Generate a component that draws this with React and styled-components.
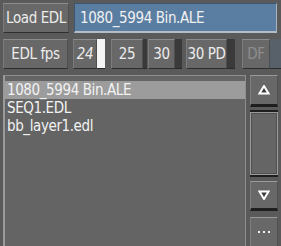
import React from "react";
import styled, { createGlobalStyle } from "styled-components";

const Global = createGlobalStyle`
  html, body { margin: 0; padding: 0; background: #5a5a5a; }
  body {
    font-family: "DejaVu Sans Condensed", "DejaVu Sans", sans-serif;
    font-stretch: condensed;
  }
`;

const Panel = styled.div`
  width: 281px;
  height: 246px;
  box-sizing: border-box;
  padding: 3px 0 0 3px;
  background: #5a5a5a;
  display: flex;
  flex-direction: column;
  gap: 6px;
  overflow: hidden;
  color: #ececec;
  font-size: 15px;
  letter-spacing: -0.4px;
`;

const Row = styled.div`
  display: flex;
  align-items: stretch;
  height: 30px;
`;

const Button = styled.div`
  box-sizing: border-box;
  width: ${(p) => p.$w}px;
  margin-right: ${(p) => p.$mr || 0}px;
  display: flex;
  align-items: center;
  justify-content: center;
  background: #686868;
  border-top: 1px solid #8c8c8c;
  border-left: 1px solid #7c7c7c;
  border-right: 1px solid #4e4e4e;
  border-bottom: 1px solid #2e2e2e;
  color: ${(p) => (p.$disabled ? "#8e8e8e" : "#ececec")};
  white-space: nowrap;
  padding-bottom: 1px;
`;

const Field = styled.div`
  box-sizing: border-box;
  flex: 1;
  margin-right: 4px;
  background: #5a7ea2;
  border-top: 1px solid #3c5570;
  border-left: 1px solid #3c5570;
  border-right: 1px solid #a9b4bf;
  border-bottom: 2px solid #b4bcc4;
  display: flex;
  align-items: center;
  padding-left: 5px;
  color: #f0f0f0;
`;

const Toggle = styled.div`
  display: flex;
  margin-right: ${(p) => p.$mr || 0}px;
`;

const Indicator = styled.div`
  box-sizing: border-box;
  width: ${(p) => p.$w}px;
  background: ${(p) => (p.$on ? "#f4f4f4" : p.$off ? "#58606a" : "#3a3a3a")};
  border-bottom: 1px solid #2a2a2a;
`;

const Body = styled.div`
  display: flex;
  flex: 1;
  gap: 4px;
  min-height: 0;
`;

const List = styled.div`
  box-sizing: border-box;
  width: 243px;
  height: 173px;
  background: #646464;
  border: 1px solid #8e8e8e;
  border-left: 2px solid #9a9a9a;
  padding-top: 5px;
  display: flex;
  flex-direction: column;
`;

const Item = styled.div`
  height: 18px;
  line-height: 18px;
  padding-left: 2px;
  background: ${(p) => (p.$sel ? "#9c9c9c" : "transparent")};
  color: #f2f2f2;
  white-space: nowrap;
`;

const Scroll = styled.div`
  width: 28px;
  display: flex;
  flex-direction: column;
`;

const ScrollBtn = styled.div`
  box-sizing: border-box;
  height: ${(p) => p.$h}px;
  margin-top: ${(p) => p.$mt || 0}px;
  flex-shrink: 0;
  background: #686868;
  border-top: 1px solid #9a9a9a;
  border-left: 1px solid #7e7e7e;
  border-right: 1px solid #505050;
  border-bottom: 3px solid #1e1e1e;
  display: flex;
  align-items: center;
  justify-content: center;
`;

const Track = styled.div`
  box-sizing: border-box;
  height: 67px;
  margin-top: 3px;
  flex-shrink: 0;
  background: #646464;
  border-top: 2px solid #1e1e1e;
  border-bottom: 2px solid #1e1e1e;
  display: flex;
`;

const TrackInner = styled.div`
  flex: 1;
  border: 1px solid #9a9a9a;
  box-shadow: inset 1px 1px 0 #505050, inset -1px -1px 0 #505050;
  background: #656565;
`;

const Dots = styled.div`
  display: flex;
  gap: 3px;
  margin-bottom: 4px;
`;

const Dot = styled.span`
  width: 2px;
  height: 2px;
  background: #f0f0f0;
`;

const Tri = ({ down }) => (
  <svg width="12" height="10" viewBox="0 0 12 10">
    <polygon
      points={down ? "1.5,1.5 10.5,1.5 6,9" : "6,1 10.5,8.5 1.5,8.5"}
      fill="#3c3c3c"
      stroke="#ffffff"
      strokeWidth="2"
      strokeLinejoin="miter"
    />
  </svg>
);

export default function App() {
  const files = ["1080_5994 Bin.ALE", "SEQ1.EDL", "bb_layer1.edl"];
  return (
    <>
      <Global />
      <Panel>
        <Row>
          <Button $w={66} $mr={5}>Load EDL</Button>
          <Field>1080_5994 Bin.ALE</Field>
        </Row>
        <Row>
          <Button $w={66} $mr={5}>EDL fps</Button>
          <Toggle $mr={6}>
            <Button $w={24}>
              <i>24</i>
            </Button>
            <Indicator $w={8} $on />
          </Toggle>
          <Toggle $mr={1}>
            <Button $w={32}>25</Button>
            <Indicator $w={4} />
          </Toggle>
          <Toggle $mr={4}>
            <Button $w={27}>30</Button>
            <Indicator $w={7} />
          </Toggle>
          <Toggle $mr={7}>
            <Button $w={41}>30 PD</Button>
            <Indicator $w={8} />
          </Toggle>
          <Toggle>
            <Button $w={28} $disabled>DF</Button>
            <Indicator $w={11} $off />
          </Toggle>
        </Row>
        <Body>
          <List>
            {files.map((f, i) => (
              <Item key={f} $sel={i === 0}>{f}</Item>
            ))}
          </List>
          <Scroll>
            <ScrollBtn $h={32}>
              <Tri />
            </ScrollBtn>
            <Track>
              <TrackInner />
            </Track>
            <ScrollBtn $h={30} $mt={4}>
              <Tri down />
            </ScrollBtn>
            <ScrollBtn $h={36} $mt={6}>
              <Dots>
                <Dot />
                <Dot />
                <Dot />
              </Dots>
            </ScrollBtn>
          </Scroll>
        </Body>
      </Panel>
    </>
  );
}
